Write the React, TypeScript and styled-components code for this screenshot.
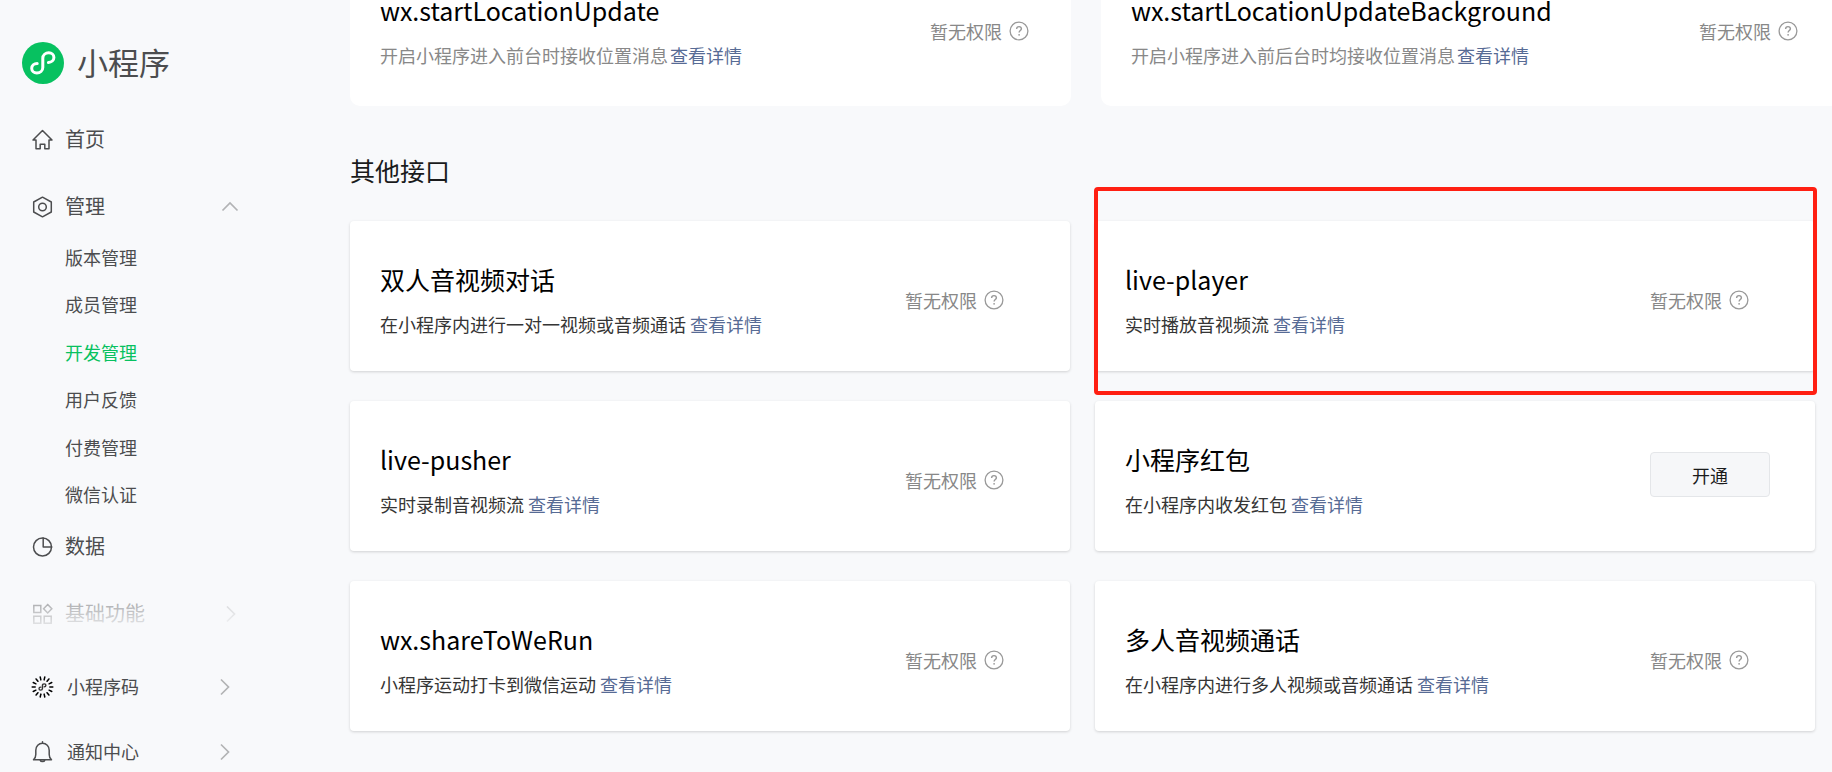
import React from "react";
import styled, { createGlobalStyle, css } from "styled-components";

const GlobalStyle = createGlobalStyle`
  *, *::before, *::after { box-sizing: border-box; }
  body {
    margin: 0;
    background: #f8f9fb;
    color: #000;
    font-family: "Noto Sans CJK SC", "Noto Sans", sans-serif;
  }
  h1, h2, h3, p, ul { margin: 0; padding: 0; font-weight: 400; }
  ul { list-style: none; }
  a { text-decoration: none; }
  button { font-family: inherit; }
`;

const Page = styled.div`
  display: flex;
  height: 100vh;
  overflow: hidden;
`;

/* ---------- sidebar ---------- */

const Sidebar = styled.aside`
  display: flex;
  flex-direction: column;
  flex: 0 0 280px;
`;

const Brand = styled.header`
  display: flex;
  align-items: center;
  gap: 13px;
  flex: none;
  height: 112px;
  padding: 14px 22px 0;
  svg { display: block; flex: none; }
`;

const BrandName = styled.h1`
  padding-bottom: 2px;
  font-size: 31px;
  line-height: 40px;
  color: #4c4d4f;
`;

const Nav = styled.nav`
  position: relative;
  flex: none;
  display: flex;
  flex-direction: column;
`;

const NavFade = styled.div`
  position: absolute;
  left: 0;
  right: 0;
  bottom: 6px;
  height: 56px;
  background: linear-gradient(rgba(248, 249, 251, 0.25), #f8f9fb);
  pointer-events: none;
`;

const NavGroup = styled.ul`
  display: flex;
  flex-direction: column;
  gap: 12px;
`;

const NavLink = styled.a<{ $small?: boolean }>`
  display: flex;
  align-items: center;
  gap: ${(p) => (p.$small ? 13 : 11)}px;
  height: ${(p) => (p.$small ? 65 : 55)}px;
  padding: 0 ${(p) => (p.$small ? 47 : 41)}px 0 30px;
  font-size: ${(p) => (p.$small ? 18 : 20)}px;
  line-height: 28px;
  color: #4c4d4f;
  svg { display: block; flex: none; }
  span { flex: 1; padding-bottom: 2px; }
`;

const SubList = styled.ul`
  display: grid;
  grid-auto-rows: 1fr;
  min-height: 285px;
  padding-left: 65px;
`;

const SubLink = styled.a<{ $active?: boolean }>`
  display: flex;
  align-items: center;
  height: 100%;
  padding-bottom: 2px;
  font-size: 18px;
  line-height: 24px;
  color: ${(p) => (p.$active ? "#07c160" : "#4c4d4f")};
`;

const SideFooter = styled.nav`
  flex: none;
  padding-top: 13px;
`;

/* ---------- content ---------- */

const Content = styled.main`
  flex: 1;
  min-width: 0;
  margin-top: -48px;
  padding: 0 17px 0 70px;
`;

const LocationGrid = styled.section`
  display: grid;
  grid-template-columns: 721fr 739fr;
  gap: 30px;
  margin-right: -25px;
`;

const ApiGrid = styled.div`
  display: grid;
  grid-template-columns: 1fr 1fr;
  gap: 30px 25px;
`;

const SectionTitle = styled.h2`
  padding: 44px 0 31px;
  font-size: 25px;
  line-height: 40px;
  color: #1a1b1c;
`;

const plainCard = css`
  padding: 38px 42px 39px 30px;
  border-radius: 10px;
`;

const raisedCard = css`
  padding: 38px 45px 35px 30px;
  border-radius: 4px;
  box-shadow: 0 1px 3px rgba(0, 0, 0, 0.16);
`;

const Card = styled.article<{ $raised?: boolean }>`
  position: relative;
  display: flex;
  justify-content: space-between;
  background: #fff;
  ${(p) => (p.$raised ? raisedCard : plainCard)}
`;

const CardTitle = styled.h3`
  font-size: 25px;
  line-height: 40px;
`;

const CardText = styled.p<{ $muted?: boolean }>`
  padding-top: 13px;
  font-size: 18px;
  line-height: 24px;
  color: ${(p) => (p.$muted ? "#888" : "#353535")};
`;

const DetailLink = styled.a<{ $tight?: boolean }>`
  margin-left: ${(p) => (p.$tight ? 2 : 4)}px;
  color: #576b95;
`;

const Action = styled.div<{ $wide?: boolean }>`
  flex: none;
  width: ${(p) => (p.$wide ? "120px" : "auto")};
  padding-top: 13px;
`;

const Status = styled.div`
  display: flex;
  align-items: center;
  gap: 7px;
  padding-top: 14px;
  font-size: 18px;
  line-height: 28px;
  color: #888;
`;

const HelpButton = styled.button`
  padding: 0;
  border: 0;
  background: none;
  cursor: pointer;
  svg { display: block; }
`;

const OpenButton = styled.button`
  width: 120px;
  height: 45px;
  border: 1px solid #e4e6e9;
  border-radius: 4px;
  background: #f6f7f9;
  font-size: 18px;
  line-height: 24px;
  color: #1a1b1c;
  cursor: pointer;
`;

const Highlight = styled.div`
  position: absolute;
  top: -34px;
  left: -1px;
  right: -2px;
  bottom: -24px;
  border: 4px solid #ff1f12;
  border-radius: 4px;
  pointer-events: none;
`;

/* ---------- icons ---------- */

const MINI_MARK =
  "M15.200 21.400C12.100 21.400 9.700 23.600 9.700 26.300c0 2.800 2.300 4.700 5.100 4.700 3.300 0 6-2.300 6-5.400V16.200c0-3.100 2.700-5.400 6-5.400 2.800 0 5.100 1.900 5.100 4.700 0 2.700-2.400 4.900-5.500 4.900";

const Logo = () => (
  <svg width="42" height="42" viewBox="0 0 42 42" aria-hidden="true">
    <circle cx="21" cy="21" r="21" fill="#07c160" />
    <path d={MINI_MARK} fill="none" stroke="#fff" strokeWidth="3" strokeLinecap="round" />
  </svg>
);

const Icon = ({ children, stroke = "#4c4d4f" }: { children: React.ReactNode; stroke?: string }) => (
  <svg width="24" height="24" viewBox="0 0 24 24" fill="none" stroke={stroke} strokeWidth="1.5" strokeLinejoin="round" strokeLinecap="round" aria-hidden="true">
    {children}
  </svg>
);

const HomeIcon = () => (
  <Icon><path d="M12.500 2.500 3 12h3v8.800h4.200v-4.600h4.600v4.600H19V12h3z" /></Icon>
);

const ManageIcon = () => (
  <Icon>
    <path d="M12.500 2.200 21.300 7v10l-8.800 4.800L3.700 17V7z" />
    <circle cx="12.500" cy="12" r="3.800" />
  </Icon>
);

const DataIcon = () => (
  <Icon>
    <circle cx="12.500" cy="12" r="9" />
    <path d="M13.200 3v9h8.500" />
  </Icon>
);

const FeaturesIcon = () => (
  <Icon>
    <path d="M3.800 3.500h7v7h-7zM3.800 14.200h7v7h-7zM14.200 14.200h7v7h-7zM17.700 2.600l4.100 4.200-4.100 4.200-4.100-4.200z" strokeLinejoin="miter" />
  </Icon>
);

const RAYS = Array.from({ length: 14 }, (_, i) => (i * 360) / 14);

const CodeIcon = () => (
  <Icon stroke="#000">
    {RAYS.map((angle) => (
      <path key={angle} d="M2.200 12h3" transform={`rotate(${angle} 12.500 12)`} strokeWidth="1.500" />
    ))}
    <path d={MINI_MARK} transform="translate(6 5.500) scale(0.310)" stroke="#333" strokeWidth="4.500" />
  </Icon>
);

const BellIcon = () => (
  <Icon>
    <path d="M3.500 19.800h18c-1.700-1.500-2.300-3-2.300-5.300v-4.300c0-4-2.900-6.900-6.700-6.900s-6.700 2.900-6.700 6.900v4.300c0 2.300-.6 3.800-2.300 5.300zM12.500 1.800v1.500M10.300 20.500c.5 1.400 3.900 1.400 4.400 0" />
  </Icon>
);

const ChevronRight = () => (
  <svg width="14" height="18" viewBox="0 0 14 18" fill="none" stroke="#b2b3b5" strokeWidth="1.700" aria-hidden="true">
    <path d="M2 1.500 9.500 9 2 16.500" />
  </svg>
);

const ChevronUp = () => (
  <svg width="18" height="14" viewBox="0 0 18 14" fill="none" stroke="#b2b3b5" strokeWidth="1.700" aria-hidden="true">
    <path d="M1.500 10.500 9 3l7.500 7.500" />
  </svg>
);

const HelpIcon = () => (
  <svg width="20" height="20" viewBox="0 0 20 20" fill="none" stroke="#999" aria-hidden="true">
    <circle cx="10" cy="10" r="8.900" strokeWidth="1.300" />
    <path d="M7.600 8c0-1.500 1-2.400 2.400-2.400s2.400.9 2.400 2.200c0 1.700-2.300 1.900-2.300 3.800" strokeWidth="1.400" />
    <circle cx="10.100" cy="13.800" r="0.900" fill="#999" stroke="none" />
  </svg>
);

/* ---------- data ---------- */

type Api = { title: string; text: string; canOpen?: boolean; highlighted?: boolean };

const manageItems = ["版本管理", "成员管理", "开发管理", "用户反馈", "付费管理", "微信认证"];

const locationApis: Api[] = [
  { title: "wx.startLocationUpdate", text: "开启小程序进入前台时接收位置消息" },
  { title: "wx.startLocationUpdateBackground", text: "开启小程序进入前后台时均接收位置消息" },
];

const otherApis: Api[] = [
  { title: "双人音视频对话", text: "在小程序内进行一对一视频或音频通话" },
  { title: "live-player", text: "实时播放音视频流", highlighted: true },
  { title: "live-pusher", text: "实时录制音视频流" },
  { title: "小程序红包", text: "在小程序内收发红包", canOpen: true },
  { title: "wx.shareToWeRun", text: "小程序运动打卡到微信运动" },
  { title: "多人音视频通话", text: "在小程序内进行多人视频或音频通话" },
];

const ApiCard = ({ api, raised }: { api: Api; raised?: boolean }) => (
  <Card $raised={raised}>
    <div>
      <CardTitle>{api.title}</CardTitle>
      <CardText $muted={!raised}>
        {api.text}
        <DetailLink href="#detail" $tight={!raised}>查看详情</DetailLink>
      </CardText>
    </div>
    <Action $wide={raised}>
      {api.canOpen ? (
        <OpenButton type="button">开通</OpenButton>
      ) : (
        <Status>
          暂无权限
          <HelpButton type="button" aria-label="权限说明"><HelpIcon /></HelpButton>
        </Status>
      )}
    </Action>
    {api.highlighted && <Highlight />}
  </Card>
);

export default function App() {
  return (
    <>
      <GlobalStyle />
      <Page>
        <Sidebar>
          <Brand>
            <Logo />
            <BrandName>小程序</BrandName>
          </Brand>
          <Nav>
            <NavGroup>
              <li><NavLink href="#home"><HomeIcon /><span>首页</span></NavLink></li>
              <li>
                <NavLink href="#manage"><ManageIcon /><span>管理</span><ChevronUp /></NavLink>
                <SubList>
                  {manageItems.map((item) => (
                    <li key={item}><SubLink href="#manage" $active={item === "开发管理"}>{item}</SubLink></li>
                  ))}
                </SubList>
                <NavLink href="#data"><DataIcon /><span>数据</span></NavLink>
              </li>
              <li><NavLink href="#features"><FeaturesIcon /><span>基础功能</span><ChevronRight /></NavLink></li>
            </NavGroup>
            <NavFade />
          </Nav>
          <SideFooter>
            <NavLink href="#code" $small><CodeIcon /><span>小程序码</span><ChevronRight /></NavLink>
            <NavLink href="#notice" $small><BellIcon /><span>通知中心</span><ChevronRight /></NavLink>
          </SideFooter>
        </Sidebar>
        <Content>
          <LocationGrid>
            {locationApis.map((api) => <ApiCard key={api.title} api={api} />)}
          </LocationGrid>
          <SectionTitle>其他接口</SectionTitle>
          <ApiGrid>
            {otherApis.map((api) => <ApiCard key={api.title} api={api} raised />)}
          </ApiGrid>
        </Content>
      </Page>
    </>
  );
}
